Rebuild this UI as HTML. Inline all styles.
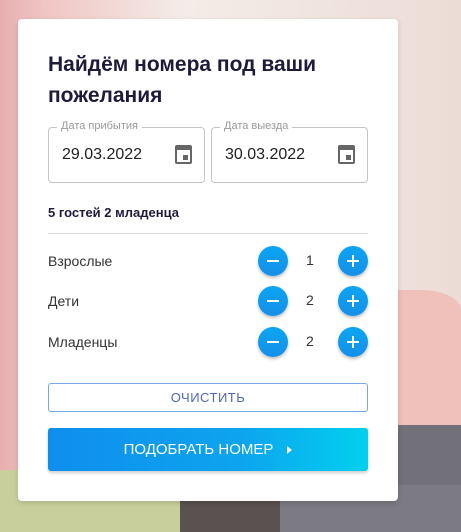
<!DOCTYPE html>
<html><head><meta charset="utf-8"><style>
*{margin:0;padding:0;box-sizing:border-box}
body{width:461px;height:532px;overflow:hidden;position:relative;font-family:"Liberation Sans",sans-serif;
background:linear-gradient(90deg,#e8aeb0 0%,#f0c6c4 10%,#f4ece8 40%,#ecdcd6 100%)}
.bg1{position:absolute;left:0;top:470px;width:180px;height:62px;background:#c9cf9c}
.bg2{position:absolute;left:180px;top:470px;width:100px;height:62px;background:#5a5250}
.bg3{position:absolute;left:280px;top:470px;width:181px;height:62px;background:#7c7a82}
.bg4{position:absolute;left:398px;top:290px;width:63px;height:140px;background:#f0c0bb;border-top-right-radius:40px 20px}
.bg5{position:absolute;left:398px;top:425px;width:63px;height:60px;background:#727078}
.card{position:absolute;left:18px;top:19px;width:380px;height:482px;background:#fff;border-radius:4px;box-shadow:0 2px 6px rgba(0,0,0,.15)}
h1{position:absolute;left:30px;top:30px;font-size:21px;line-height:31px;color:#1e1b3a;font-weight:bold;width:320px}
.f{position:absolute;top:108px;width:157px;height:56px;border:1px solid #c4c4c4;border-radius:4px}
.f .l{position:absolute;left:8px;top:-8px;background:#fff;padding:0 4px;font-size:11px;color:#999}
.f .v{position:absolute;left:13px;top:18px;font-size:16px;color:#222}
.cal{position:absolute;right:12px;top:17px;width:17px;height:19px;border:2px solid #666;border-top-width:5px;border-radius:2px}
.cal:after{content:"";position:absolute;right:2px;bottom:2px;width:5px;height:5px;background:#666}
.g{position:absolute;left:30px;top:186px;font-size:13px;font-weight:bold;color:#1e1b3a}
.hr{position:absolute;left:30px;top:214px;width:320px;height:1px;background:#ddd}
.row{position:absolute;left:30px;width:320px;height:30px}
.row .n{position:absolute;left:0;top:7px;font-size:14px;color:#333}
.btn{position:absolute;top:0;width:30px;height:30px;border-radius:50%;background:linear-gradient(180deg,#0aa6f2,#1590e8);box-shadow:0 2px 3px rgba(0,0,0,.25)}
.btn.m{left:210px}.btn.p{left:290px}
.btn.m:after,.btn.p:after{content:"";position:absolute;left:9px;top:14px;width:12px;height:2px;background:#fff}
.btn.p:before{content:"";position:absolute;left:14px;top:9px;width:2px;height:12px;background:#fff}
.row .c{position:absolute;left:258px;top:6px;font-size:14px;color:#333}
.clr{position:absolute;left:30px;top:364px;width:320px;height:29px;border:1px solid #7aa8e0;border-radius:3px;text-align:center;line-height:27px;font-size:13px;color:#5166b8;letter-spacing:.5px}
.go{position:absolute;left:30px;top:409px;width:320px;height:43px;border-radius:3px;background:linear-gradient(90deg,#0f8eee,#0da4ee 60%,#02d0ee);color:#fff;font-size:15px;line-height:43px;text-align:center;box-shadow:0 2px 3px rgba(0,0,0,.2)}
.go span{display:inline-block;margin-left:14px;border-left:5px solid #fff;border-top:4px solid transparent;border-bottom:4px solid transparent;vertical-align:middle}
</style></head><body>
<div class="bg1"></div><div class="bg2"></div><div class="bg3"></div><div class="bg4"></div><div class="bg5"></div>
<div class="card">
<h1>Найдём номера под ваши пожелания</h1>
<div class="f" style="left:30px"><div class="l">Дата прибытия</div><div class="v">29.03.2022</div><div class="cal"></div></div>
<div class="f" style="left:193px"><div class="l">Дата выезда</div><div class="v">30.03.2022</div><div class="cal"></div></div>
<div class="g">5 гостей 2 младенца</div>
<div class="hr"></div>
<div class="row" style="top:227px"><div class="n">Взрослые</div><div class="btn m"></div><div class="c">1</div><div class="btn p"></div></div>
<div class="row" style="top:267px"><div class="n">Дети</div><div class="btn m"></div><div class="c">2</div><div class="btn p"></div></div>
<div class="row" style="top:308px"><div class="n">Младенцы</div><div class="btn m"></div><div class="c">2</div><div class="btn p"></div></div>
<div class="clr">ОЧИСТИТЬ</div>
<div class="go">ПОДОБРАТЬ НОМЕР<span></span></div>
</div>
</body></html>
